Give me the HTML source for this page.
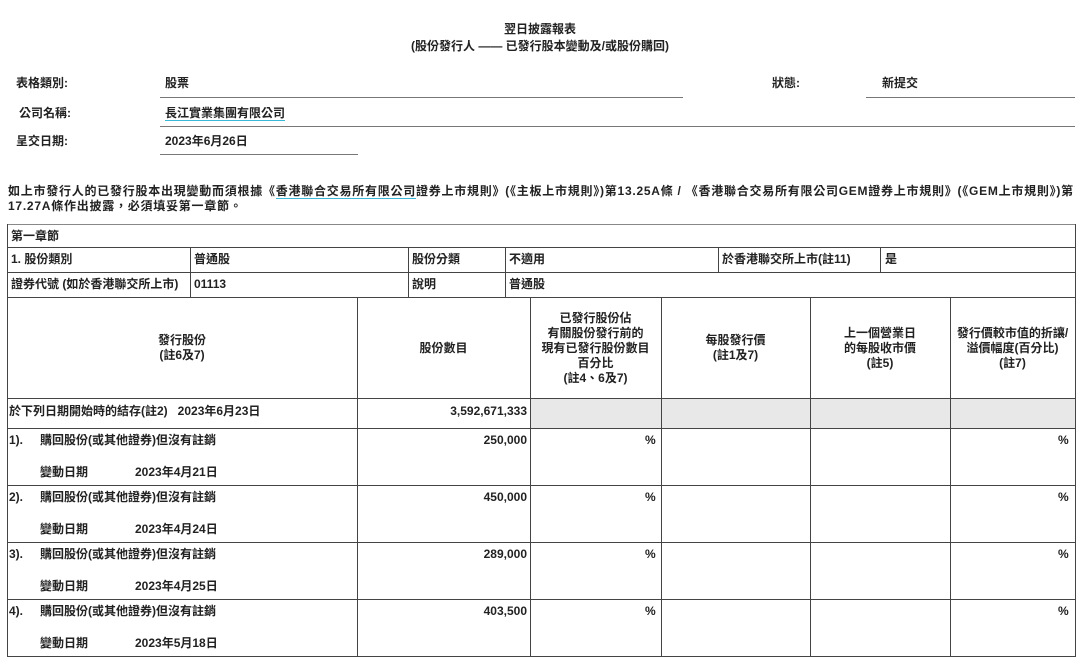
<!DOCTYPE html>
<html><head><meta charset="utf-8"><style>
body{margin:0;width:1080px;height:666px;background:#fff;position:relative;overflow:hidden;font-family:"Liberation Sans","Noto Sans CJK TC",sans-serif;font-size:12px;color:#222;font-weight:bold}
.t{position:absolute;white-space:nowrap;line-height:15px}
.h{position:absolute;height:1px;background:#444}
.v{position:absolute;width:1px;background:#444}
.g{position:absolute;background:#e8e8e8}
.c{text-align:center}
.r{text-align:right}
.u{border-bottom:1px solid #3bb8d8}
</style></head><body>
<div class="t c" style="left:0;width:1080px;top:22px">翌日披露報表</div>
<div class="t c" style="left:0;width:1080px;top:39px">(股份發行人 —— 已發行股本變動及/或股份購回)</div>

<div class="t" style="left:16px;top:76px">表格類別:</div>
<div class="t" style="left:165px;top:76px">股票</div>
<div class="h" style="left:160px;width:523px;top:97px;background:#777"></div>
<div class="t" style="left:772px;top:76px">狀態:</div>
<div class="t" style="left:882px;top:76px">新提交</div>
<div class="h" style="left:866px;width:209px;top:97px;background:#777"></div>
<div class="t" style="left:19px;top:106px">公司名稱:</div>
<div class="t" style="left:165px;top:106px"><span class="u">長江實業集團有限公司</span></div>
<div class="h" style="left:160px;width:915px;top:126px;background:#777"></div>
<div class="t" style="left:16px;top:134px">呈交日期:</div>
<div class="t" style="left:165px;top:134px">2023年6月26日</div>
<div class="h" style="left:160px;width:198px;top:154px;background:#777"></div>

<div class="t" style="left:8px;top:184px;letter-spacing:0.75px">如上市發行人的已發行股本出現變動而須根據《<span class="u">香港聯合交易所有限公司</span>證券上市規則》(《主板上市規則》)第13.25A條 / 《香港聯合交易所有限公司GEM證券上市規則》(《GEM上市規則》)第</div>
<div class="t" style="left:8px;top:199px;letter-spacing:0.75px">17.27A條作出披露，必須填妥第一章節。</div>

<div class="g" style="left:530px;top:398px;width:545px;height:30px"></div>

<div class="h" style="left:7px;width:1069px;top:224px;background:#888"></div>
<div class="h" style="left:7px;width:1069px;top:247px"></div>
<div class="h" style="left:7px;width:1069px;top:272px"></div>
<div class="h" style="left:7px;width:1069px;top:297px"></div>
<div class="h" style="left:7px;width:1069px;top:398px"></div>
<div class="h" style="left:7px;width:1069px;top:428px"></div>
<div class="h" style="left:7px;width:1069px;top:485px"></div>
<div class="h" style="left:7px;width:1069px;top:542px"></div>
<div class="h" style="left:7px;width:1069px;top:599px"></div>
<div class="h" style="left:7px;width:1069px;top:656px"></div>
<div class="v" style="left:7px;top:224px;height:433px"></div>
<div class="v" style="left:1075px;top:224px;height:433px"></div>
<div class="v" style="left:190px;top:247px;height:50px"></div>
<div class="v" style="left:408px;top:247px;height:50px"></div>
<div class="v" style="left:505px;top:247px;height:50px"></div>
<div class="v" style="left:718px;top:247px;height:25px"></div>
<div class="v" style="left:880px;top:247px;height:25px"></div>
<div class="v" style="left:357px;top:297px;height:360px"></div>
<div class="v" style="left:530px;top:297px;height:360px"></div>
<div class="v" style="left:661px;top:297px;height:360px"></div>
<div class="v" style="left:810px;top:297px;height:360px"></div>
<div class="v" style="left:950px;top:297px;height:360px"></div>

<div class="t" style="left:11px;top:229px">第一章節</div>
<div class="t" style="left:11px;top:252px">1. 股份類別</div>
<div class="t" style="left:194px;top:252px">普通股</div>
<div class="t" style="left:412px;top:252px">股份分類</div>
<div class="t" style="left:509px;top:252px">不適用</div>
<div class="t" style="left:722px;top:252px">於香港聯交所上市(註11)</div>
<div class="t" style="left:885px;top:252px">是</div>
<div class="t" style="left:11px;top:277px">證券代號 (如於香港聯交所上市)</div>
<div class="t" style="left:194px;top:277px">01113</div>
<div class="t" style="left:412px;top:277px">說明</div>
<div class="t" style="left:509px;top:277px">普通股</div>

<div class="t c" style="left:7px;width:350px;top:333px">發行股份<br>(註6及7)</div>
<div class="t c" style="left:357px;width:173px;top:341px">股份數目</div>
<div class="t c" style="left:530px;width:131px;top:311px">已發行股份佔<br>有關股份發行前的<br>現有已發行股份數目<br>百分比<br>(註4、6及7)</div>
<div class="t c" style="left:661px;width:149px;top:333px">每股發行價<br>(註1及7)</div>
<div class="t c" style="left:810px;width:140px;top:326px">上一個營業日<br>的每股收市價<br>(註5)</div>
<div class="t c" style="left:950px;width:125px;top:326px">發行價較市值的折讓/<br>溢價幅度(百分比)<br>(註7)</div>

<div class="t" style="left:9px;top:404px">於下列日期開始時的結存(註2)&nbsp;&nbsp;&nbsp;2023年6月23日</div>
<div class="t r" style="left:357px;width:170px;top:404px">3,592,671,333</div>

<div class="t" style="left:9px;top:433px">1).</div><div class="t" style="left:40px;top:433px">購回股份(或其他證券)但沒有註銷</div>
<div class="t" style="left:40px;top:465px">變動日期</div><div class="t" style="left:135px;top:465px">2023年4月21日</div>
<div class="t r" style="left:357px;width:170px;top:433px">250,000</div>
<div class="t" style="left:645px;top:433px">%</div><div class="t" style="left:1058px;top:433px">%</div>

<div class="t" style="left:9px;top:490px">2).</div><div class="t" style="left:40px;top:490px">購回股份(或其他證券)但沒有註銷</div>
<div class="t" style="left:40px;top:522px">變動日期</div><div class="t" style="left:135px;top:522px">2023年4月24日</div>
<div class="t r" style="left:357px;width:170px;top:490px">450,000</div>
<div class="t" style="left:645px;top:490px">%</div><div class="t" style="left:1058px;top:490px">%</div>

<div class="t" style="left:9px;top:547px">3).</div><div class="t" style="left:40px;top:547px">購回股份(或其他證券)但沒有註銷</div>
<div class="t" style="left:40px;top:579px">變動日期</div><div class="t" style="left:135px;top:579px">2023年4月25日</div>
<div class="t r" style="left:357px;width:170px;top:547px">289,000</div>
<div class="t" style="left:645px;top:547px">%</div><div class="t" style="left:1058px;top:547px">%</div>

<div class="t" style="left:9px;top:604px">4).</div><div class="t" style="left:40px;top:604px">購回股份(或其他證券)但沒有註銷</div>
<div class="t" style="left:40px;top:636px">變動日期</div><div class="t" style="left:135px;top:636px">2023年5月18日</div>
<div class="t r" style="left:357px;width:170px;top:604px">403,500</div>
<div class="t" style="left:645px;top:604px">%</div><div class="t" style="left:1058px;top:604px">%</div>
</body></html>
